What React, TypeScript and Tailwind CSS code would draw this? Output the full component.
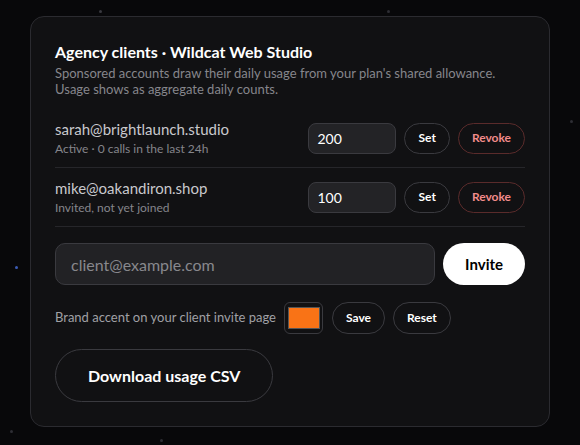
const stars: [number, number, string][] = [
  [99, 10, "bg-[#3a3a40]"],
  [305, 31, "bg-[#3b5bb5]"],
  [234, 20, "bg-[#2e2e34]"],
  [387, 10, "bg-[#2e2e34]"],
  [459, 39, "bg-[#2e2e34]"],
  [170, 39, "bg-[#2a2a30]"],
  [373, 147, "bg-[#3b5bb5]"],
  [15, 266, "bg-[#3b5bb5]"],
  [236, 397, "bg-[#2f3a70]"],
  [189, 418, "bg-[#2a2a30]"],
  [160, 439, "bg-[#2e2e34]"],
  [50, 400, "bg-[#2e2e34]"],
  [260, 420, "bg-[#2a2a30]"],
  [570, 120, "bg-[#2e2e34]"],
  [10, 430, "bg-[#2e2e34]"],
  [540, 240, "bg-[#2e2e34]"],
];

function Row({ email, status, value }: { email: string; status: string; value: string }) {
  return (
    <div className="flex h-[58px] items-center justify-between">
      <div className="flex flex-col gap-[2px]">
        <span className="text-[15px] leading-[19px] text-[#c9c9cd]">{email}</span>
        <span className="text-[12px] leading-[15px] text-[#85858b]">{status}</span>
      </div>
      <div className="flex items-center gap-2">
        <input
          defaultValue={value}
          className="h-[31px] w-[88px] rounded-[8px] border border-[#3a3a3f] bg-[#232326] px-[8px] text-[14px] text-white outline-none"
        />
        <button className="h-[31px] rounded-full border border-[#3a3a3f] px-[13px] text-[12px] font-bold text-white">
          Set
        </button>
        <button className="h-[31px] rounded-full border border-[#5a2b2b] px-[13px] text-[12px] font-bold text-[#f28b8b]">
          Revoke
        </button>
      </div>
    </div>
  );
}

export default function App() {
  return (
    <div className="relative h-[445px] w-[580px] overflow-hidden bg-[#08080a] font-['Lato',sans-serif]">
      {stars.map(([x, y, c], i) => (
        <span
          key={i}
          className={`absolute h-[3px] w-[3px] rounded-full ${c}`}
          style={{ left: x, top: y }}
        />
      ))}
      <div className="relative ml-[30px] mt-[16px] flex w-[520px] flex-col rounded-[14px] border border-[#2b2b30] bg-[#111113] px-[24px] pb-[24px] pt-[24px]">
        <h2 className="text-[16px] font-bold leading-[21px] text-white">
          Agency clients · Wildcat Web Studio
        </h2>
        <p className="mt-[3px] text-[13px] leading-[16px] text-[#86868c]">
          Sponsored accounts draw their daily usage from your plan's shared allowance.
          <br />
          Usage shows as aggregate daily counts.
        </p>

        <div className="mt-[12px] flex flex-col">
          <Row email="sarah@brightlaunch.studio" status="Active · 0 calls in the last 24h" value="200" />
          <div className="h-px bg-[#26262a]" />
          <Row email="mike@oakandiron.shop" status="Invited, not yet joined" value="100" />
          <div className="h-px bg-[#26262a]" />
        </div>

        <div className="mt-[16px] flex items-center gap-2">
          <input
            placeholder="client@example.com"
            className="h-[42px] flex-1 rounded-[10px] border border-[#3a3a3f] bg-[#222225] px-[15px] text-[16px] text-white outline-none placeholder:text-[#88888d]"
          />
          <button className="h-[42px] rounded-full bg-white px-[22px] text-[15px] font-bold text-black">
            Invite
          </button>
        </div>

        <div className="mt-[17px] flex items-center">
          <span className="text-[13px] text-[#a0a0a5]">Brand accent on your client invite page</span>
          <div className="ml-[8px] flex h-[32px] w-[39px] items-center justify-center rounded-[6px] border border-[#3a3a3f]">
            <div className="h-[22px] w-[32px] border border-[#555] bg-[#f97316]" />
          </div>
          <button className="ml-[9px] h-[32px] rounded-full border border-[#3a3a3f] px-[13px] text-[12px] font-bold text-white">
            Save
          </button>
          <button className="ml-[8px] h-[32px] rounded-full border border-[#3a3a3f] px-[13px] text-[12px] font-bold text-white">
            Reset
          </button>
        </div>

        <div className="mt-[15px]">
          <button className="h-[53px] rounded-full border border-[#3a3a3f] px-[32px] text-[16px] font-bold text-white">
            Download usage CSV
          </button>
        </div>
      </div>
    </div>
  );
}
